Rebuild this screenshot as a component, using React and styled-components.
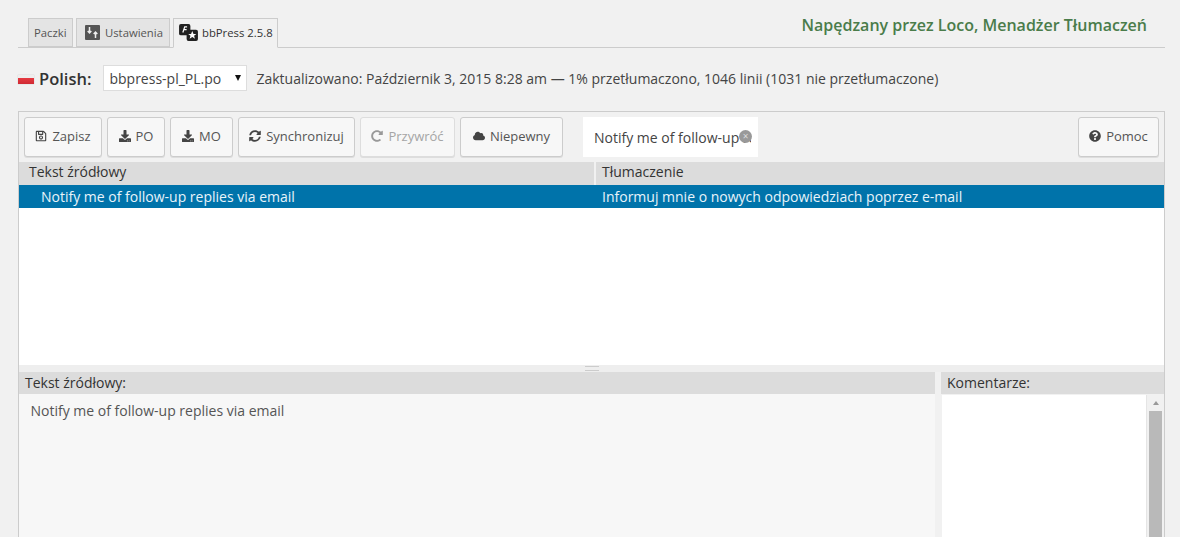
import React from "react";
import styled, { createGlobalStyle } from "styled-components";
import { FaRegSave, FaDownload, FaSyncAlt, FaRedoAlt, FaCloud, FaQuestionCircle } from "react-icons/fa";

const Global = createGlobalStyle`
  html, body { margin: 0; padding: 0; height: 537px; overflow: hidden; background: #f1f1f1; }
  body { font-family: "Open Sans", sans-serif; color: #444; }
  * { box-sizing: border-box; }
`;
const Page = styled.div`
  width: 1180px; height: 537px; overflow: hidden;
  padding: 0 15px 0 18px;
`;
const Nav = styled.div`
  height: 48px; display: flex; align-items: flex-end; justify-content: space-between;
  border-bottom: 1px solid #ccc; padding-left: 10px;
`;
const Tabs = styled.div`display: flex; gap: 3px;`;
const Tab = styled.div`
  height: ${p => (p.$active ? 30 : 29)}px; margin-bottom: ${p => (p.$active ? -1 : 0)}px;
  width: ${p => p.$w}px;
  display: flex; align-items: center; gap: ${p => (p.$active ? 4 : 5)}px;
  padding: 0 0 ${p => (p.$active ? 2 : 0)}px ${p => p.$pl}px;
  font-size: 11.3px; color: ${p => (p.$active ? "#333" : "#555")};
  background: ${p => (p.$active ? "#f1f1f1" : "#e4e4e4")};
  border: 1px solid #ccc; border-bottom-color: ${p => (p.$active ? "#f1f1f1" : "#ccc")};
`;
const Credit = styled.div`
  font-size: 16px; font-weight: 600; color: #4a7c4a; margin: 0 18px 12px 0; line-height: 20px;
`;
const Meta = styled.div`
  height: 63px; display: flex; align-items: center; padding-bottom: 3px;
`;
const Flag = styled.span`
  width: 16px; height: 9px; margin-top: 3px; display: block;
  background: linear-gradient(#eee 0 3px, #e63a42 3px, #cf2a33);
  box-shadow: 0 0 1px #bbb;
`;
const Lang = styled.strong`
  font-size: 16.5px; font-weight: 600; color: #333; margin: 0 12px 0 5px;
`;
const FileSelect = styled.div`
  width: 144px; height: 26px; background: #fff; border: 1px solid #ddd;
  display: flex; align-items: center; justify-content: space-between;
  padding: 0 5px 0 5px; font-size: 14px; color: #444;
`;
const Caret = styled.span`
  width: 0; height: 0; border: 3.5px solid transparent; border-top: 6px solid #111; border-bottom: 0;
`;
const Status = styled.span`font-size: 14px; color: #444; margin-left: 9px;`;
const Panel = styled.div`
  border: 1px solid #ccc; border-bottom: 0; height: 426px; display: flex; flex-direction: column; background: #f1f1f1;
`;
const Toolbar = styled.div`
  height: 50px; display: flex; align-items: center; padding: 0 5px; flex: none;
`;
const Btn = styled.div`
  height: 40px; width: ${p => p.$w}px; margin-right: ${p => p.$mr ?? 5}px;
  display: flex; align-items: center; justify-content: center; gap: 5px;
  padding-bottom: 2px;
  background: #f7f7f7; border: 1px solid ${p => (p.$off ? "#ddd" : "#ccc")}; border-radius: 3px;
  box-shadow: 0 1px 0 #ddd;
  font-size: 13px; color: ${p => (p.$off ? "#a5a5a5" : "#555")};
  svg { font-size: 12px; color: ${p => (p.$off ? "#999" : "#444")}; }
`;
const Search = styled.div`
  width: 175px; height: 40px; margin-left: 15px; background: #fff; position: relative;
`;
const SearchInput = styled.input`
  width: 168px; height: 100%; border: 0; outline: 0; background: transparent; padding: 0 0 0 11px;
  font: 14px "Open Sans", sans-serif; color: #444;
`;
const Clear = styled.span`
  position: absolute; right: 6px; top: 13px; width: 13px; height: 13px; border-radius: 50%;
  background: #999; color: #ddd; font-size: 10px; line-height: 13px; text-align: center;
`;
const Spacer = styled.div`flex: 1;`;
const Row = styled.div`
  height: ${p => p.$h}px; flex: none; display: grid; grid-template-columns: 575px 1fr;
  align-items: center; font-size: 14px; line-height: 20px;
  background: ${p => p.$bg}; color: ${p => p.$c};
  font-weight: ${p => p.$w || 400};
`;
const Cell = styled.div`
  padding: 0 0 ${p => p.$pb || 0}px ${p => p.$pl}px; height: 100%; display: flex; align-items: center;
  border-left: ${p => (p.$sep ? "2px solid #f1f1f1" : "0")};
`;
const List = styled.div`flex: none; height: 157px; background: #fff;`;
const Grip = styled.div`
  flex: none; height: 7px; background: #eee; display: flex; align-items: center; justify-content: center;
  padding-bottom: 1px;
  &::before { content: ""; width: 14px; height: 3px; border-top: 1px solid #ccc; border-bottom: 1px solid #ccc; }
`;
const Editor = styled.div`
  flex: 1; display: grid; grid-template-columns: 916px 1fr; column-gap: 6px; min-height: 0;
`;
const Pane = styled.div`display: flex; flex-direction: column; min-height: 0;`;
const PaneHead = styled.div`
  height: 22px; flex: none; background: #dcdcdc; font-size: 14px; line-height: 21px; padding-left: 6px; color: #333;
`;
const SourceBody = styled.div`
  flex: 1; background: #f7f7f7; padding: 7px 12px 7px 11.5px; font-size: 14px; line-height: 20px; color: #555;
`;
const NoteBody = styled.div`
  flex: 1; background: #fff; display: flex; justify-content: flex-end; margin-top: 1px; margin-left: 1px;
`;
const Scroll = styled.div`
  width: 18px; background: #f1f1f1; border-left: 1px solid #e5e5e5; display: flex; flex-direction: column; align-items: center; padding: 6px 2px 0;
`;
const ScrollUp = styled.span`
  width: 0; height: 0; border: 3.5px solid transparent; border-bottom: 4px solid #999; border-top: 0; margin-bottom: 6px;
`;
const Thumb = styled.div`width: 13px; flex: 1; background: #b9b9b9;`;

const BundleIcon = () => (
  <svg width="15" height="15" viewBox="0 0 15 15"><rect width="15" height="15" rx="1" fill="#555"/><path d="M4.5 2v6M2.7 6 4.5 8 6.3 6M10.5 13V7M8.7 9l1.8-2 1.8 2" stroke="#eee" strokeWidth="1.5" fill="none"/></svg>
);
const LocoIcon = () => (
  <svg width="19" height="17" viewBox="0 0 20 18">
    <rect x="0" y="0" width="12" height="12" rx="2" fill="#222"/>
    <path d="M4 9 6 3h2.5M5 6h3" stroke="#fff" strokeWidth="1.3" fill="none"/>
    <rect x="8" y="6" width="12" height="12" rx="2" fill="#222"/>
    <path d="m14 7.5 1.3 3h3l-2.4 2 .9 3-2.8-1.7-2.8 1.7.9-3-2.4-2h3z" fill="#fff"/>
  </svg>
);

export default function App() {
  return (
    <Page>
      <Global />
      <Nav>
        <Tabs>
          <Tab $w={45} $pl={5}>Paczki</Tab>
          <Tab $w={94} $pl={8}><BundleIcon />Ustawienia</Tab>
          <Tab $w={105} $pl={5} $active><LocoIcon />bbPress 2.5.8</Tab>
        </Tabs>
        <Credit>Napędzany przez Loco, Menadżer Tłumaczeń</Credit>
      </Nav>
      <Meta>
        <Flag />
        <Lang>Polish:</Lang>
        <FileSelect>bbpress-pl_PL.po<Caret /></FileSelect>
        <Status>Zaktualizowano: Październik 3, 2015 8:28 am — 1% przetłumaczono, 1046 linii (1031 nie przetłumaczone)</Status>
      </Meta>
      <Panel>
        <Toolbar>
          <Btn $w={78}><FaRegSave />Zapisz</Btn>
          <Btn $w={58}><FaDownload />PO</Btn>
          <Btn $w={63}><FaDownload />MO</Btn>
          <Btn $w={117}><FaSyncAlt />Synchronizuj</Btn>
          <Btn $w={95} $off><FaRedoAlt />Przywróć</Btn>
          <Btn $w={103}><FaCloud />Niepewny</Btn>
          <Search>
            <SearchInput readOnly value="Notify me of follow-up replies via email" />
            <Clear>×</Clear>
          </Search>
          <Spacer />
          <Btn $w={81} $mr={0}><FaQuestionCircle />Pomoc</Btn>
        </Toolbar>
        <Row $h={23} $bg="#dcdcdc" $c="#333">
          <Cell $pl={10} $pb={3}>Tekst źródłowy</Cell>
          <Cell $pl={6} $pb={3} $sep>Tłumaczenie</Cell>
        </Row>
        <Row $h={23} $bg="#0073aa" $c="#e8f4fa" $w={500}>
          <Cell $pl={22}>Notify me of follow-up replies via email</Cell>
          <Cell $pl={8}>Informuj mnie o nowych odpowiedziach poprzez e-mail</Cell>
        </Row>
        <List />
        <Grip />
        <Editor>
          <Pane>
            <PaneHead>Tekst źródłowy:</PaneHead>
            <SourceBody>Notify me of follow-up replies via email</SourceBody>
          </Pane>
          <Pane>
            <PaneHead>Komentarze:</PaneHead>
            <NoteBody><Scroll><ScrollUp /><Thumb /></Scroll></NoteBody>
          </Pane>
        </Editor>
      </Panel>
    </Page>
  );
}
